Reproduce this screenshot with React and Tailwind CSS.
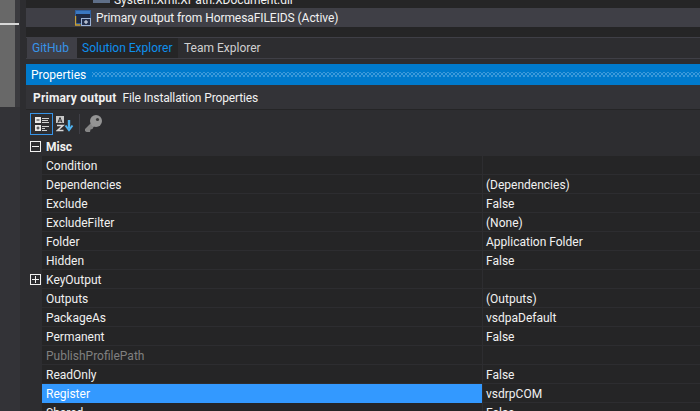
import { Fragment } from "react";

const rows = [
  ["Condition", ""],
  ["Dependencies", "(Dependencies)"],
  ["Exclude", "False"],
  ["ExcludeFilter", "(None)"],
  ["Folder", "Application Folder"],
  ["Hidden", "False"],
  ["KeyOutput", "", "plus"],
  ["Outputs", "(Outputs)"],
  ["PackageAs", "vsdpaDefault"],
  ["Permanent", "False"],
  ["PublishProfilePath", "", "dim"],
  ["ReadOnly", "False"],
  ["Register", "vsdrpCOM", "selected"],
  ["Shared", "False"],
];

function BoxIcon({ plus }) {
  return (
    <svg width="11" height="11" viewBox="0 0 11 11" className="block">
      <rect x="0.5" y="0.5" width="10" height="10" fill="none" stroke="#f1f1f1" />
      <path d="M2 5.5h7" stroke="#f1f1f1" />
      {plus ? <path d="M5.5 2v7" stroke="#f1f1f1" /> : null}
    </svg>
  );
}

function ProjectIcon() {
  return (
    <svg width="16" height="16" viewBox="0 0 16 16" className="block">
      <rect x="0.5" y="0.5" width="15" height="13" fill="#1e2a44" stroke="#2f5f9e" />
      <rect x="1" y="1" width="14" height="3" fill="#3a78c2" />
      <path d="M0.5 6v9h5" fill="none" stroke="#c8a23c" strokeWidth="1.4" />
      <rect x="6.5" y="8.5" width="9" height="7" fill="#23304e" stroke="#9db4d6" />
      <path d="M9 12h4M11 10v4" stroke="#e6edf7" />
    </svg>
  );
}

function CategorizedIcon() {
  return (
    <svg width="16" height="16" viewBox="0 0 16 16" className="block">
      <g fill="#e8e8e8">
        <rect x="1" y="1" width="6" height="6" />
        <rect x="1" y="9" width="6" height="6" />
      </g>
      <path d="M2.5 4h3M2.5 12h3M4 10.5v3" stroke="#2d2d30" />
      <path d="M8 2.5h7M8 4.5h6M8 6.5h7M8 10.5h7M8 12.5h3M8 14.5h5" stroke="#d0d0d0" />
    </svg>
  );
}

function AlphaIcon() {
  return (
    <svg width="18" height="16" viewBox="0 0 18 16" className="block">
      <rect x="0" y="0" width="8" height="7" fill="#c8c8c8" />
      <path d="M2 6.5 4 1.5 6 6.5M2.8 5h2.4" fill="none" stroke="#2d2d30" />
      <path d="M1 9.5h6L1.5 14.5h6" fill="none" stroke="#d8d8d8" strokeWidth="1.5" />
      <path d="M13 4v8" stroke="#4fb3f0" strokeWidth="2.4" />
      <path d="M9.5 9.5 13 14l3.5-4.5" fill="none" stroke="#4fb3f0" strokeWidth="2" />
    </svg>
  );
}

function KeyIcon() {
  return (
    <svg width="17" height="18" viewBox="0 0 17 18" className="block">
      <path d="M0 14 7 7l3.500 3.500-2 1.500-1 2-2 .5-.5 2.500H1.500L0 16z" fill="#858585" />
      <circle cx="11" cy="6" r="6" fill="#949494" />
      <circle cx="12.500" cy="4.500" r="1.600" fill="#3a3a3a" />
    </svg>
  );
}

export default function App() {
  return (
    <div className="flex h-[411px] w-[700px] overflow-hidden bg-[#2d2d30] text-xs leading-none text-[#f1f1f1] font-['Roboto','Noto_Sans',sans-serif]">
      <div className="w-[26px] shrink-0 bg-[#2d2d30]">
        <div className="h-[107px] w-5 bg-[#3a3a3e]">
          <div className="h-full w-[15px] bg-[#686868]">
            <div className="relative top-[23px] h-[2px] w-[19px] bg-[#d8d8d8]" />
          </div>
        </div>
        <div className="h-[304px] w-5 bg-[#333337]" />
      </div>

      <div className="min-w-0 flex-1">
        <div className="bg-[#252526]">
          <div className="flex h-2 items-end gap-1 overflow-hidden pl-[67px]">
            <div className="mb-[5px] h-[3px] w-[17px] bg-[#5f6f88]" />
            <span className="whitespace-nowrap leading-4 tracking-[-0.07px]">System.Xml.XPath.XDocument.dll</span>
          </div>
          <div className="flex h-[19px] items-center gap-[5px] bg-[#3f3f46] pl-[49px]">
            <ProjectIcon />
            <span className="whitespace-nowrap pt-px tracking-[-0.07px]">Primary output from HormesaFILEIDS (Active)</span>
          </div>
          <div className="h-[10px]" />
        </div>

        <div className="flex h-[21px] items-stretch border-t border-[#3f3f46] bg-[#2d2d30] pl-px">
          <div className="flex w-[50px] items-center bg-[#3f3f46] pl-[5px] text-[#3794e8]">GitHub</div>
          <div className="flex w-[101px] items-center bg-[#252526] pl-[5px] text-[#0e8fec]">Solution Explorer</div>
          <div className="flex w-[90px] items-center pl-[6px] text-[#d0d0d0]">Team Explorer</div>
        </div>

        <div className="h-[6px] border-t border-[#3f3f46]" />

        <div className="flex h-[21px] items-center bg-[#007acc] pl-[5px] text-white">
          <span className="w-[61px] pt-px">Properties</span>
          <div className="h-[5px] flex-1 bg-[radial-gradient(#3f9bdc_0.7px,transparent_0.8px),radial-gradient(#3f9bdc_0.7px,transparent_0.8px)] bg-[length:4px_4px] bg-[position:0_0,2px_2px]" />
        </div>

        <div className="flex h-[25px] items-center gap-[6px] border-b border-[#252526] bg-[#333337] pl-[7px]">
          <span className="pt-px font-bold tracking-[0.2px]">Primary output</span>
          <span className="pt-px tracking-[-0.13px]">File Installation Properties</span>
        </div>

        <div className="flex h-[27px] items-center bg-[#2d2d30] pl-[4px]">
          <div className="flex h-[22px] w-[23px] items-center justify-center border border-[#3794e8]">
            <CategorizedIcon />
          </div>
          <div className="ml-[3px]">
            <AlphaIcon />
          </div>
          <div className="ml-[5px] h-5 w-px bg-[#3f3f46]" />
          <div className="ml-[5px]">
            <KeyIcon />
          </div>
        </div>

        <div className="grid grid-cols-[16px_440px_1fr]">
          <div className="flex h-[19px] items-center pl-[4px]">
            <BoxIcon />
          </div>
          <div className="col-span-2 flex h-[19px] items-center pl-[4px] pt-px font-bold">Misc</div>
          {rows.map(([name, value, kind]) => (
            <Fragment key={name}>
              <div className="flex h-[19px] items-center pl-[4px]">
                {kind === "plus" ? <BoxIcon plus /> : null}
              </div>
              <div
                className={
                  kind === "selected"
                    ? "flex h-[19px] items-center bg-[#3399ff] pl-[4px] pt-px text-white"
                    : kind === "dim"
                      ? "flex h-[19px] items-center border-b border-[#2d2d30] bg-[#252526] pl-[4px] pt-px text-[#808080]"
                      : "flex h-[19px] items-center border-b border-[#2d2d30] bg-[#252526] pl-[4px] pt-px"
                }
              >
                {name}
              </div>
              <div className="flex h-[19px] items-center border-b border-l border-[#2d2d30] bg-[#252526] pl-[3px] pt-px">
                {value}
              </div>
            </Fragment>
          ))}
        </div>
      </div>
    </div>
  );
}
